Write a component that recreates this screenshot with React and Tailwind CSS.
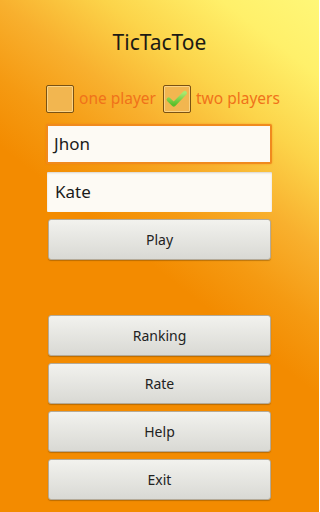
import React from "react";

function Check({ checked }) {
  return (
    <div className="relative w-[28px] h-[28px] rounded-[2px] border-[1.5px] border-[#7a5212] bg-[#f2b650] shadow-[inset_0_0_0_1px_rgba(255,230,170,0.6)] shrink-0">
      {checked && (
        <svg viewBox="0 0 28 28" className="absolute inset-0 w-full h-full">
          <defs>
            <linearGradient id="g" x1="0" y1="0" x2="0" y2="1">
              <stop offset="0" stopColor="#a8e870" />
              <stop offset="1" stopColor="#5cbf2a" />
            </linearGradient>
          </defs>
          <path d="M5 14.5 L10.5 20 L22.5 7.5" fill="none" stroke="url(#g)" strokeWidth="4.5" strokeLinecap="round" strokeLinejoin="round" />
        </svg>
      )}
    </div>
  );
}

function Btn({ children }) {
  return (
    <div className="mx-[48px] h-[41px] rounded-[3px] border border-[#b4aa98] bg-gradient-to-b from-[#f2f2ee] to-[#d9d9d4] shadow-[0_1px_1px_rgba(120,70,0,0.45)] flex items-center justify-center text-[14px] text-[#222]">
      {children}
    </div>
  );
}

export default function App() {
  return (
    <div
      className="w-[319px] h-[512px] overflow-hidden flex flex-col bg-[linear-gradient(38deg,#f38b00_0%,#f38b00_48%,#f59a12_57%,#f8b02e_67%,#fcd44a_78%,#fff06a_90%,#fff778_100%)]"
      style={{ fontFamily: '"Noto Sans", "Open Sans", sans-serif' }}
    >
      <div className="pt-[29px] h-[84px] text-center text-[21px] leading-[26px] text-[#1c1a14]">TicTacToe</div>
      <div className="flex items-center pl-[46px] h-[29px]">
        <Check />
        <span className="ml-[5px] text-[15.5px] text-[#f0721a]">one player</span>
        <div className="ml-[7px]"><Check checked /></div>
        <span className="ml-[5px] text-[15.5px] text-[#f0721a]">two players</span>
      </div>
      <div className="mt-[11px] mx-[47px] ml-[46px] h-[40px] rounded-[2px] border-2 border-[#f08a1e] bg-[#fdfaf4] flex items-center pl-[6px] text-[17px] text-[#1a1a1a] shadow-[0_0_2px_rgba(240,120,0,0.6)]">
        Jhon
      </div>
      <div className="mt-[8px] mx-[47px] h-[40px] rounded-[1px] bg-[#fdfaf4] flex items-center pl-[8px] text-[17px] text-[#1a1a1a] shadow-[inset_0_1px_2px_rgba(0,0,0,0.15)]">
        Kate
      </div>
      <div className="mt-[7px] flex flex-col">
        <Btn>Play</Btn>
      </div>
      <div className="mt-[55px] flex flex-col gap-[7px]">
        <Btn>Ranking</Btn>
        <Btn>Rate</Btn>
        <Btn>Help</Btn>
        <Btn>Exit</Btn>
      </div>
    </div>
  );
}
